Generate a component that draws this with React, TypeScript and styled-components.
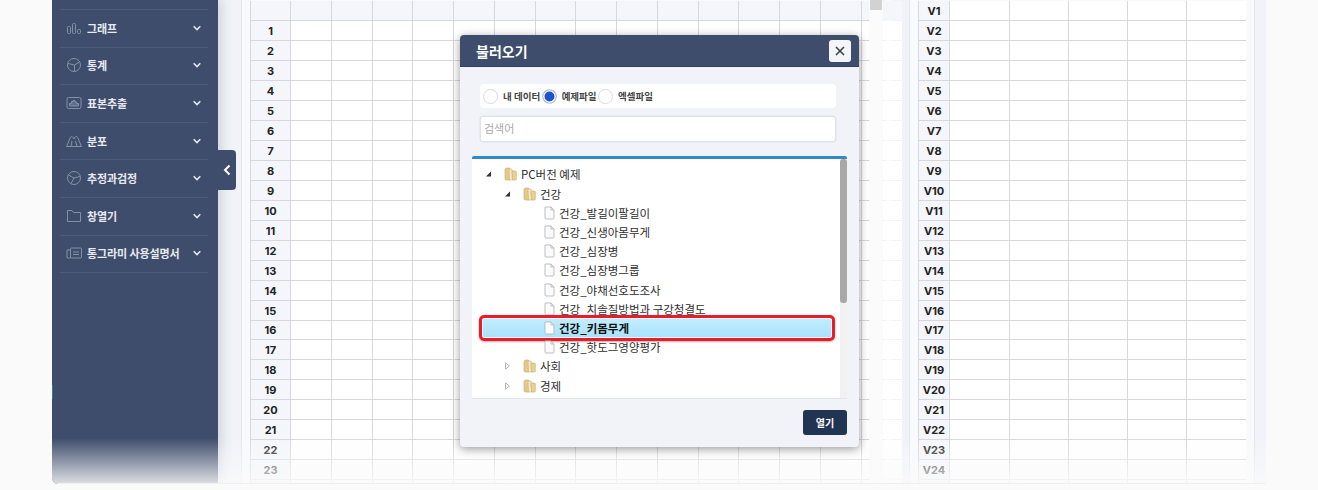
import styled, { createGlobalStyle } from "styled-components";

const MENU = [
  { label: "그래프", icon: "bars" },
  { label: "통계", icon: "pie" },
  { label: "표본추출", icon: "sample" },
  { label: "분포", icon: "mountain" },
  { label: "추정과검정", icon: "pie2" },
  { label: "창열기", icon: "folder" },
  { label: "통그라미 사용설명서", icon: "manual" },
];

const TREE = [
  { label: "PC버전 예제", level: 0, kind: "open" },
  { label: "건강", level: 1, kind: "open" },
  { label: "건강_발길이팔길이", level: 2, kind: "file" },
  { label: "건강_신생아몸무게", level: 2, kind: "file" },
  { label: "건강_심장병", level: 2, kind: "file" },
  { label: "건강_심장병그룹", level: 2, kind: "file" },
  { label: "건강_야채선호도조사", level: 2, kind: "file" },
  { label: "건강_치솔질방법과 구강청결도", level: 2, kind: "file" },
  { label: "건강_키몸무게", level: 2, kind: "file", selected: true },
  { label: "건강_핫도그영양평가", level: 2, kind: "file" },
  { label: "사회", level: 1, kind: "closed" },
  { label: "경제", level: 1, kind: "closed" },
];

const INDENT = [13, 32, 53];
const ROW_COUNT = 25;

function MenuIcon({ name }: { name: string }) {
  const c = "#8591a9";
  return (
    <svg width="16" height="16" viewBox="0 0 16 16" fill="none" stroke={c} strokeWidth="1">
      {name === "bars" && (
        <>
          <rect x="1.5" y="6.5" width="3" height="7" rx="1" />
          <rect x="6.5" y="3.5" width="3" height="10" rx="1" />
          <rect x="11.5" y="9.5" width="3" height="4" rx="1" />
        </>
      )}
      {name === "pie" && (
        <>
          <circle cx="8" cy="8" r="6.5" />
          <path d="M2 6.5L8.5 8L13.5 5M8.5 8L8.5 14.5" />
        </>
      )}
      {name === "sample" && (
        <>
          <rect x="1" y="2.5" width="14" height="11" rx="1.5" />
          <path d="M3.5 11V8.5H5.5V6.5H7V5.5H9V7H10.5V8.5H12.5V11Z" fill={c} fillOpacity="0.5" />
        </>
      )}
      {name === "mountain" && (
        <>
          <path d="M0.5 13.5L4.5 4.2C5 3.2 6.3 3.2 6.9 4.2L8 6L9 4.2C9.6 3.2 11 3.2 11.5 4.2L15.5 13.5Z" />
          <path d="M5 13.5L6 8M11 13.5L9.5 8" />
        </>
      )}
      {name === "pie2" && (
        <>
          <circle cx="8" cy="8" r="6.5" />
          <path d="M2.5 5L8 8L14 6.5M8 8L5 13.5" />
        </>
      )}
      {name === "folder" && <path d="M1.5 13.5V2.5H6L7.5 4.5H14.5V13.5Z" strokeLinejoin="round" />}
      {name === "manual" && (
        <>
          <rect x="4.5" y="3" width="11" height="10" rx="1" />
          <path d="M4.5 5H1V12.5C1 13 1.5 13 2 13H4.5M7 7H13M7 9.5H13" />
        </>
      )}
    </svg>
  );
}

function Chevron() {
  return (
    <svg width="10" height="10" viewBox="0 0 10 10" fill="none" stroke="#e4e7ee" strokeWidth="1.6">
      <path d="M1.7 3.3L5 6.6L8.3 3.3" />
    </svg>
  );
}

function FolderIcon() {
  return (
    <svg width="13" height="14" viewBox="0 0 13 14">
      <path d="M1 2.5C1 1.5 2 1 3 1H5.5L6 13H2.5C1.5 13 1 12.5 1 11.5Z" fill="#e3c98c" stroke="#c7a766" strokeWidth="0.6" />
      <path d="M5 2H8L8.5 13H5.5Z" fill="#f6ebc6" stroke="#cdb071" strokeWidth="0.6" />
      <path d="M8 4H11.5C12 4 12.3 4.3 12.3 4.8V12.2C12.3 12.7 12 13 11.5 13H8.5Z" fill="#e9d195" stroke="#c7a766" strokeWidth="0.6" />
    </svg>
  );
}

function FileIcon() {
  return (
    <svg width="11" height="14" viewBox="0 0 11 14" fill="#fbfbfb" stroke="#b4b8bd" strokeWidth="0.9">
      <path d="M1 1H7L10 4V12C10 12.6 9.6 13 9 13H2C1.4 13 1 12.6 1 12Z" />
      <path d="M7 1V4H10" fill="none" />
    </svg>
  );
}

function Toggle({ kind }: { kind: string }) {
  if (kind === "file") return <ToggleSlot />;
  return (
    <ToggleSlot>
      <svg width="7" height="8" viewBox="0 0 7 8">
        {kind === "open" ? (
          <path d="M6 1.5V6.5H1Z" fill="#333" />
        ) : (
          <path d="M1.5 0.8L5.5 4L1.5 7.2Z" fill="#fff" stroke="#a6a6a6" strokeWidth="0.8" />
        )}
      </svg>
    </ToggleSlot>
  );
}

function Grid({ variant }: { variant: "data" | "vars" }) {
  const isData = variant === "data";
  const cols = isData ? 15 : 5;
  return (
    <Sheet $variant={variant}>
      {Array.from({ length: ROW_COUNT }).map((_, r) => {
        const last = r === ROW_COUNT - 1;
        // the row past the bottom edge is only grid lines, no label
        const head = last ? "" : isData ? (r === 0 ? "" : String(r)) : `V${r + 1}`;
        return (
          <SheetRow key={r} $variant={variant}>
            <HeadCell>{head}</HeadCell>
            {Array.from({ length: cols }).map((_, c) => (
              <Cell key={c} $shaded={isData && r === 0} />
            ))}
          </SheetRow>
        );
      })}
    </Sheet>
  );
}

export default function App() {
  return (
    <>
      <GlobalStyle />
      <Page>
        <Frame>
          <Sidebar>
            {MENU.map((item) => (
              <MenuItem key={item.label}>
                <MenuIcon name={item.icon} />
                <MenuLabel>{item.label}</MenuLabel>
                <Chevron />
              </MenuItem>
            ))}
          </Sidebar>
          <CollapseTab>
            <svg width="10" height="14" viewBox="0 0 10 14" fill="none" stroke="#fff" strokeWidth="2">
              <path d="M7.5 2.5L3 7L7.5 11.5" />
            </svg>
          </CollapseTab>
          <Workspace>
            <DataPanel>
              <Grid variant="data" />
              <PanelScroll>
                <PanelThumb />
              </PanelScroll>
            </DataPanel>
            <VarPanel>
              <Grid variant="vars" />
            </VarPanel>
          </Workspace>
          <BottomFade />
          <Modal>
            <ModalHeader>
              <ModalTitle>불러오기</ModalTitle>
              <CloseButton>
                <svg width="10" height="10" viewBox="0 0 10 10" stroke="#3b3f46" strokeWidth="1.6">
                  <path d="M1 1L9 9M9 1L1 9" />
                </svg>
              </CloseButton>
            </ModalHeader>
            <ModalBody>
              <RadioBar>
                <Radio />
                <RadioLabel>내 데이터</RadioLabel>
                <Radio $checked />
                <RadioLabel>예제파일</RadioLabel>
                <Radio />
                <RadioLabel>엑셀파일</RadioLabel>
              </RadioBar>
              <SearchInput placeholder="검색어" readOnly />
              <TreeBox>
                <TreeList>
                  {TREE.map((node) => (
                    <TreeRow key={node.label} $level={node.level} $selected={node.selected}>
                      <Toggle kind={node.kind} />
                      {node.kind === "file" ? <FileIcon /> : <FolderIcon />}
                      <TreeLabel $selected={node.selected}>{node.label}</TreeLabel>
                    </TreeRow>
                  ))}
                </TreeList>
                <TreeScroll>
                  <TreeThumb />
                </TreeScroll>
              </TreeBox>
              <ModalFooter>
                <OpenButton>열기</OpenButton>
              </ModalFooter>
            </ModalBody>
          </Modal>
        </Frame>
      </Page>
    </>
  );
}

const GlobalStyle = createGlobalStyle`
  html, body {
    margin: 0;
    padding: 0;
    background: #fafafa;
  }
  * {
    box-sizing: border-box;
  }
`;

const Page = styled.div`
  height: 490px;
  padding-left: 52px;
  overflow: hidden;
  background: #fafafa;
  font-family: "Noto Sans CJK KR", "Noto Sans", sans-serif;
`;

const Frame = styled.div`
  position: relative;
  display: flex;
  width: 1214px;
  height: 484px;
  overflow: hidden;
  border-radius: 0 0 0 6px;
`;

const Sidebar = styled.nav`
  position: relative;
  flex: 0 0 166px;
  padding: 9px 10px 0 8px;
  background: #3e4d6b;
  box-shadow: 4px 0 10px rgba(60, 70, 90, 0.18);
  z-index: 1;

  &::before {
    content: "";
    display: block;
    border-top: 1px solid #4e5c7b;
  }

  &::after {
    content: "";
    position: absolute;
    left: 0;
    top: 385px;
    width: 1px;
    height: 14px;
    background: #2f7d80;
  }
`;

const MenuItem = styled.div`
  display: flex;
  align-items: center;
  height: 37.6px;
  padding: 0 6px 1px 6px;
  border-bottom: 1px solid #4e5c7b;

  svg:last-child {
    margin-left: auto;
  }
`;

const MenuLabel = styled.span`
  margin-left: 5px;
  color: #e8eaf0;
  font-size: 11px;
  font-weight: 700;
  letter-spacing: -0.1px;
  white-space: nowrap;
`;

const CollapseTab = styled.div`
  position: absolute;
  left: 166px;
  top: 150px;
  z-index: 2;
  display: flex;
  align-items: center;
  justify-content: center;
  width: 18px;
  height: 40px;
  background: #3e4d6b;
  border-radius: 0 4px 4px 0;
`;

const Workspace = styled.main`
  flex: 1;
  display: flex;
  padding: 0 12px 0 23px;
  background: #f1f3f9;
`;

const DataPanel = styled.section`
  display: flex;
  flex: 0 0 642px;
  height: 100%;
  padding-left: 8px;
  background: #f9fafd;
  border-left: 1px solid #e4e6ee;
  border-right: 1px solid #e6e8ef;
  box-shadow: 8px 0 0 #f8f9fc;
`;

const VarPanel = styled.section`
  flex: 0 0 346px;
  height: 100%;
  margin-left: 25px;
  padding-left: 8px;
  background: #f9fafd;
  border-left: 1px solid #e4e6ee;
  border-right: 1px solid #e4e6ee;
`;

const Sheet = styled.div<{ $variant: string }>`
  display: flex;
  flex-direction: column;
  width: ${({ $variant }) => ($variant === "data" ? "619px" : "328px")};
  margin-top: 1px;
  border-left: 1px solid #d8d8dc;
  border-right: 1px solid #d0d0d3;
  background: #fff;
`;

const SheetRow = styled.div<{ $variant: string }>`
  display: grid;
  grid-template-columns: ${({ $variant }) =>
    $variant === "data" ? "40px repeat(15, 40.75px)" : "31px 60px 59px 59px 59px 59px"};
  flex: 0 0 19.97px;
  height: 19.97px;
  border-bottom: 1px solid #d8d8dc;
`;

const HeadCell = styled.div`
  display: flex;
  align-items: center;
  justify-content: center;
  padding-top: 1px;
  background: #f5f6fb;
  border-right: 1px solid #d8d8dc;
  color: #222;
  font-family: Inter, "Liberation Sans", sans-serif;
  font-size: 11px;
  font-weight: 700;
`;

const Cell = styled.div<{ $shaded: boolean }>`
  background: ${({ $shaded }) => ($shaded ? "#f5f6fb" : "#fff")};
  border-right: 1px solid #d8d8dc;

  &:last-child {
    border-right: 0;
  }
`;

const PanelScroll = styled.div`
  flex: 0 0 14px;
  padding: 0 1px;
  background: #fbfbfc;
`;

const PanelThumb = styled.div`
  height: 10px;
  background: #d2d2d4;
`;

const BottomFade = styled.div`
  position: absolute;
  left: 0;
  right: 0;
  bottom: 0;
  z-index: 3;
  height: 46px;
  background: linear-gradient(rgba(250, 250, 250, 0), rgba(250, 250, 250, 0.82));
  border-bottom: 1px solid #f0f0f2;
`;

const Modal = styled.div`
  position: absolute;
  left: 408px;
  top: 35px;
  z-index: 4;
  width: 399px;
  height: 412px;
  overflow: hidden;
  background: #f1f3f8;
  border-radius: 4px;
  box-shadow: 0 2px 10px rgba(0, 0, 0, 0.4);
`;

const ModalHeader = styled.header`
  display: flex;
  align-items: center;
  justify-content: space-between;
  height: 32px;
  padding: 0 8px 0 16px;
  background: #3e4d6b;
  border-bottom: 1px solid #33415e;
`;

const ModalTitle = styled.h2`
  margin: 0;
  color: #fff;
  font-size: 14px;
  font-weight: 700;
`;

const CloseButton = styled.div`
  display: flex;
  align-items: center;
  justify-content: center;
  width: 22px;
  height: 22px;
  background: #f4f5f8;
  border-radius: 3px;
`;

const ModalBody = styled.div`
  display: flex;
  flex-direction: column;
  padding: 17px 12px 0;
`;

const RadioBar = styled.div`
  display: flex;
  align-items: center;
  height: 24px;
  margin: 0 11px 8px 8px;
  padding-left: 1.5px;
  background: #fff;
  border-radius: 4px;
`;

const Radio = styled.span<{ $checked?: boolean }>`
  flex: 0 0 15px;
  width: 15px;
  height: 15px;
  margin-left: 1.5px;
  background: ${({ $checked }) => ($checked ? "#1a55cc" : "#fff")};
  border: 1px solid #d9dbe6;
  border-radius: 50%;
  box-shadow: ${({ $checked }) => ($checked ? "inset 0 0 0 1.5px #fff" : "none")};
`;

const RadioLabel = styled.span`
  margin-left: 5px;
  color: #444;
  font-size: 9.5px;
  font-weight: 700;
  white-space: nowrap;
`;

const SearchInput = styled.input`
  height: 26px;
  margin: 0 11px 14px 8px;
  padding: 0 3px 2px;
  background: #fff;
  border: 1px solid #e1e3ec;
  border-radius: 3px;
  box-shadow: 0 0 0 0.5px #e1e3ec;
  font-family: inherit;
  font-size: 11px;
  outline: none;

  &::placeholder {
    color: #a9a9a9;
  }
`;

const TreeBox = styled.div`
  display: flex;
  height: 242px;
  background: #fff;
  border-top: 3px solid #2f8cc4;
  border-radius: 2px 2px 0 0;
  box-shadow: 0 1px 0 #e3e5ec;
`;

const TreeList = styled.ul`
  flex: 1;
  margin: 0;
  padding: 5.9px 0 0;
  list-style: none;
`;

const TreeRow = styled.li<{ $level: number; $selected?: boolean }>`
  position: relative;
  display: flex;
  align-items: center;
  height: 19.2px;
  padding-left: ${({ $level }) => INDENT[$level]}px;
  white-space: nowrap;

  svg {
    position: relative;
    z-index: 1;
    flex: none;
  }

  &::before {
    content: ${({ $selected }) => ($selected ? '""' : "none")};
    position: absolute;
    z-index: 1;
    left: 7px;
    right: 5px;
    top: -3.5px;
    bottom: -3.5px;
    background: linear-gradient(#c3edfe, #a9e2fd);
    border: 3px solid #ec1c26;
    border-radius: 5px;
    box-shadow: 0 1px 2px rgba(0, 0, 0, 0.3), inset 0 0 0 1px #e3f6ff;
  }
`;

const ToggleSlot = styled.span`
  position: relative;
  z-index: 1;
  display: flex;
  flex: 0 0 19px;
  align-items: center;
`;

const TreeLabel = styled.span<{ $selected?: boolean }>`
  position: relative;
  z-index: 1;
  margin-left: 4px;
  color: ${({ $selected }) => ($selected ? "#111" : "#2e2e2e")};
  font-size: 11.5px;
  font-weight: ${({ $selected }) => ($selected ? 700 : 400)};
`;

const TreeScroll = styled.div`
  flex: 0 0 7px;
  background: #f1f1f1;
`;

const TreeThumb = styled.div`
  height: 144px;
  background: #a8a8a8;
  border-radius: 3px;
`;

const ModalFooter = styled.div`
  display: flex;
  justify-content: flex-end;
  padding-top: 12px;
`;

const OpenButton = styled.div`
  display: flex;
  align-items: center;
  justify-content: center;
  width: 44px;
  height: 25px;
  background: #1f3552;
  border-radius: 3px;
  color: #fff;
  font-size: 10px;
  font-weight: 700;
`;
